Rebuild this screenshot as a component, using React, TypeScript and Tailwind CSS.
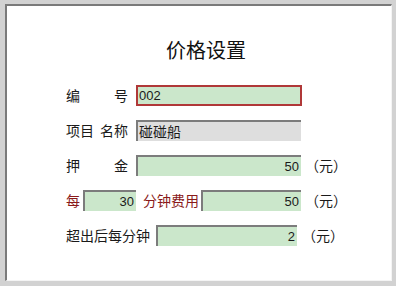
const cjk = { fontFamily: '"Noto Sans CJK SC", "Noto Sans", sans-serif' };
const num = { fontFamily: '"Liberation Sans", Arial, sans-serif' };

type FieldProps = {
  value: string;
  width: string;
  tone?: 'green' | 'gray' | 'focus';
  align?: 'left' | 'right';
};

function Field({ value, width, tone = 'green', align = 'right' }: FieldProps) {
  const toneClass =
    tone === 'focus'
      ? 'border-2 border-[#b03838] bg-[#cbe7cb] text-[13px]'
      : tone === 'gray'
        ? 'border-t-2 border-l-2 border-t-[#7c7c7c] border-l-[#7c7c7c] bg-[#dedede] text-[14px]'
        : 'border-t-2 border-l-2 border-t-[#7c7c7c] border-l-[#7c7c7c] bg-[#cbe7cb] text-[13px]';
  return (
    <div
      className={`${width} ${toneClass} h-[21px] flex items-center text-[#1a1a1a] ${
        align === 'right' ? 'justify-end pr-[2px]' : 'justify-start pl-[1px]'
      }`}
      style={tone === 'gray' ? cjk : num}
    >
      {value}
    </div>
  );
}

function Yuan() {
  return <span className="ml-[4px] text-[14px] text-[#1a1a1a]">（元）</span>;
}

export default function App() {
  return (
    <div className="w-[396px] h-[286px] bg-[#d2d2d2] pt-[4px] pl-[5px]">
      <div
        className="w-[387px] h-[277px] bg-white border-t-2 border-l-2 border-t-[#7a7a7a] border-l-[#7a7a7a] border-r border-b border-r-[#f4f4f4] border-b-[#f4f4f4]"
        style={cjk}
      >
        <div className="mt-[30px] h-[28px] leading-[28px] text-center pl-[14px] text-[20px] text-[#111111]">
          价格设置
        </div>

        <div className="mt-[21px] pl-[59px] flex flex-col gap-[14px] text-[14px] text-[#1a1a1a]">
          <div className="flex items-center h-[21px]">
            <div className="w-[62px] flex justify-between">
              <span>编</span>
              <span>号</span>
            </div>
            <div className="ml-[8px]">
              <Field value="002" width="w-[166px]" tone="focus" align="left" />
            </div>
          </div>

          <div className="flex items-center h-[21px]">
            <div className="w-[62px] flex justify-between">
              <span>项目</span>
              <span>名称</span>
            </div>
            <div className="ml-[8px]">
              <Field value="碰碰船" width="w-[165px]" tone="gray" align="left" />
            </div>
          </div>

          <div className="flex items-center h-[21px]">
            <div className="w-[62px] flex justify-between">
              <span>押</span>
              <span>金</span>
            </div>
            <div className="ml-[8px]">
              <Field value="50" width="w-[165px]" />
            </div>
            <Yuan />
          </div>

          <div className="flex items-center h-[21px]">
            <span className="text-[#8a1a1a]">每</span>
            <div className="ml-[3px]">
              <Field value="30" width="w-[53px]" />
            </div>
            <span className="ml-[7px] text-[#8a1a1a]">分钟费用</span>
            <div className="ml-[2px]">
              <Field value="50" width="w-[100px]" />
            </div>
            <Yuan />
          </div>

          <div className="flex items-center h-[21px]">
            <span>超出后每分钟</span>
            <div className="ml-[6px]">
              <Field value="2" width="w-[141px]" />
            </div>
            <span className="ml-[5px] text-[14px] text-[#1a1a1a]">（元）</span>
          </div>
        </div>
      </div>
    </div>
  );
}
